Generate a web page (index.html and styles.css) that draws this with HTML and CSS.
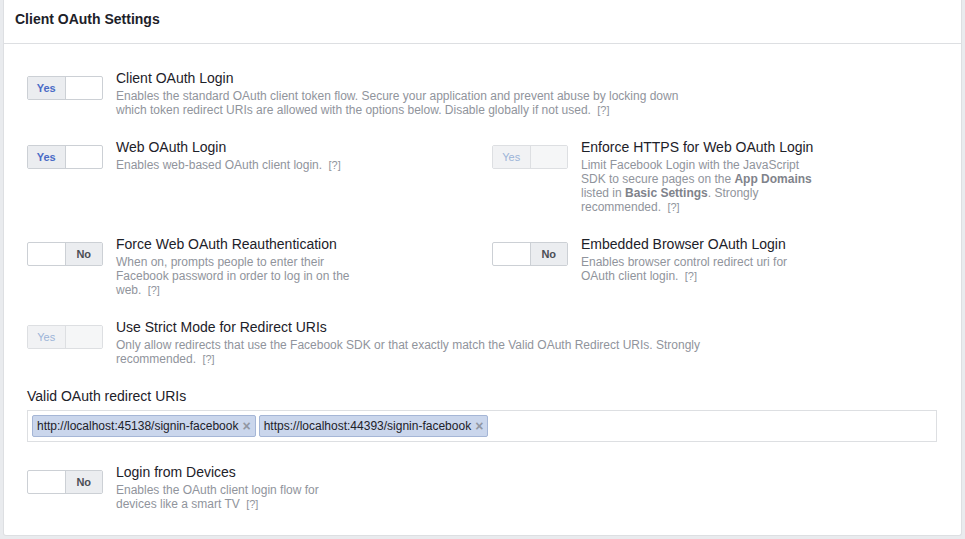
FILE: index.html
```html
<!DOCTYPE html>
<html>
<head>
<meta charset="utf-8">
<link rel="stylesheet" href="styles.css">
</head>
<body>
<div class="card">
  <div class="card-header">Client OAuth Settings</div>
  <div class="card-body">
    <div class="row">
      <div class="item wide">
        <div class="toggle on"><span class="seg yes">Yes</span><span class="seg"></span></div>
        <div class="text">
          <div class="title">Client OAuth Login</div>
          <div class="desc">Enables the standard OAuth client token flow. Secure your application and prevent abuse by locking down which token redirect URIs are allowed with the options below. Disable globally if not used. <span class="help">[?]</span></div>
        </div>
      </div>
    </div>
    <div class="row two">
      <div class="item">
        <div class="toggle on"><span class="seg yes">Yes</span><span class="seg"></span></div>
        <div class="text">
          <div class="title">Web OAuth Login</div>
          <div class="desc">Enables web-based OAuth client login. <span class="help">[?]</span></div>
        </div>
      </div>
      <div class="item">
        <div class="toggle on disabled"><span class="seg yes">Yes</span><span class="seg"></span></div>
        <div class="text">
          <div class="title">Enforce HTTPS for Web OAuth Login</div>
          <div class="desc">Limit Facebook Login with the JavaScript SDK to secure pages on the <b>App Domains</b> listed in <b>Basic Settings</b>. Strongly recommended. <span class="help">[?]</span></div>
        </div>
      </div>
    </div>
    <div class="row two">
      <div class="item">
        <div class="toggle off"><span class="seg"></span><span class="seg no">No</span></div>
        <div class="text">
          <div class="title">Force Web OAuth Reauthentication</div>
          <div class="desc">When on, prompts people to enter their Facebook password in order to log in on the web. <span class="help">[?]</span></div>
        </div>
      </div>
      <div class="item">
        <div class="toggle off"><span class="seg"></span><span class="seg no">No</span></div>
        <div class="text">
          <div class="title">Embedded Browser OAuth Login</div>
          <div class="desc">Enables browser control redirect uri for OAuth client login. <span class="help">[?]</span></div>
        </div>
      </div>
    </div>
    <div class="row">
      <div class="item wide">
        <div class="toggle on disabled"><span class="seg yes">Yes</span><span class="seg"></span></div>
        <div class="text">
          <div class="title">Use Strict Mode for Redirect URIs</div>
          <div class="desc">Only allow redirects that use the Facebook SDK or that exactly match the Valid OAuth Redirect URIs. Strongly recommended. <span class="help">[?]</span></div>
        </div>
      </div>
    </div>
    <div class="field">
      <div class="field-label">Valid OAuth redirect URIs</div>
      <div class="tokenizer">
        <span class="token">http://localhost:45138/signin-facebook<span class="x">×</span></span>
        <span class="token">https://localhost:44393/signin-facebook<span class="x">×</span></span>
      </div>
    </div>
    <div class="row two last">
      <div class="item">
        <div class="toggle off"><span class="seg"></span><span class="seg no">No</span></div>
        <div class="text">
          <div class="title">Login from Devices</div>
          <div class="desc">Enables the OAuth client login flow for devices like a smart TV <span class="help">[?]</span></div>
        </div>
      </div>
    </div>
  </div>
</div>
</body>
</html>
```

FILE: styles.css
```css
html, body {
  margin: 0;
  padding: 0;
}
body {
  background: #e9ebee;
  padding: 0 3px 3px 3px;
  font-family: "Liberation Sans", Arial, sans-serif;
  color: #1d2129;
}
.card {
  background: #fff;
  border: 1px solid #dddfe2;
  border-top: none;
  border-radius: 0 0 3px 3px;
}
.card-header {
  padding: 10px 11px 15px;
  font-size: 14px;
  line-height: 18px;
  font-weight: bold;
  color: #1d2129;
  border-bottom: 1px solid #dddfe2;
}
.card-body {
  padding: 25px 24px 24px 23px;
  display: flex;
  flex-direction: column;
}
.row {
  margin-bottom: 21px;
}
.row.last {
  margin-bottom: 0;
}
.row.two {
  display: grid;
  grid-template-columns: 1fr 1fr;
  column-gap: 20px;
}
.item {
  display: flex;
  align-items: flex-start;
  gap: 13px;
}
.toggle {
  flex: none;
  margin-top: 7px;
  width: 76px;
  height: 24px;
  box-sizing: border-box;
  border: 1px solid #ccd0d5;
  border-radius: 2px;
  display: flex;
  overflow: hidden;
  background: #fff;
}
.seg {
  flex: 1;
  display: flex;
  align-items: center;
  justify-content: center;
  font-size: 11px;
  font-weight: bold;
}
.seg + .seg {
  border-left: 1px solid #ccd0d5;
}
.seg.yes {
  background: #ebedf0;
  color: #4a6bc6;
}
.seg.no {
  background: #ebedf0;
  color: #4b4f56;
}
.toggle.disabled {
  border-color: #dddfe2;
}
.toggle.disabled .seg + .seg {
  border-left-color: #dddfe2;
}
.toggle.disabled .seg {
  background: #f5f6f7;
}
.toggle.disabled .seg.yes {
  color: #9cb4d8;
  font-weight: normal;
  background: #f1f2f4;
}
.text {
  min-width: 0;
}
.title {
  font-size: 14px;
  line-height: 18px;
  color: #1d2129;
}
.desc {
  margin-top: 2px;
  font-size: 12px;
  line-height: 14px;
  color: #90949c;
  max-width: 240px;
}
.wide .desc {
  max-width: 590px;
}
.desc b {
  color: #7f838b;
}
.help {
  font-size: 11px;
  line-height: 14px;
  margin-left: 3px;
}
.field {
  margin-bottom: 21px;
}
.field-label {
  font-size: 14px;
  line-height: 18px;
  color: #1d2129;
  margin-bottom: 5px;
}
.tokenizer {
  border: 1px solid #dddfe2;
  padding: 4px;
  display: flex;
  gap: 3px;
  height: 22px;
}
.token {
  display: inline-flex;
  align-items: center;
  height: 22px;
  box-sizing: border-box;
  padding: 0 4px;
  background: #cad6ec;
  border: 1px solid #a5b6d6;
  border-radius: 2px;
  font-size: 12px;
  color: #1d2129;
}
.token .x {
  color: #9197a3;
  margin-left: 4px;
  font-size: 14px;
  font-weight: bold;
}
```
